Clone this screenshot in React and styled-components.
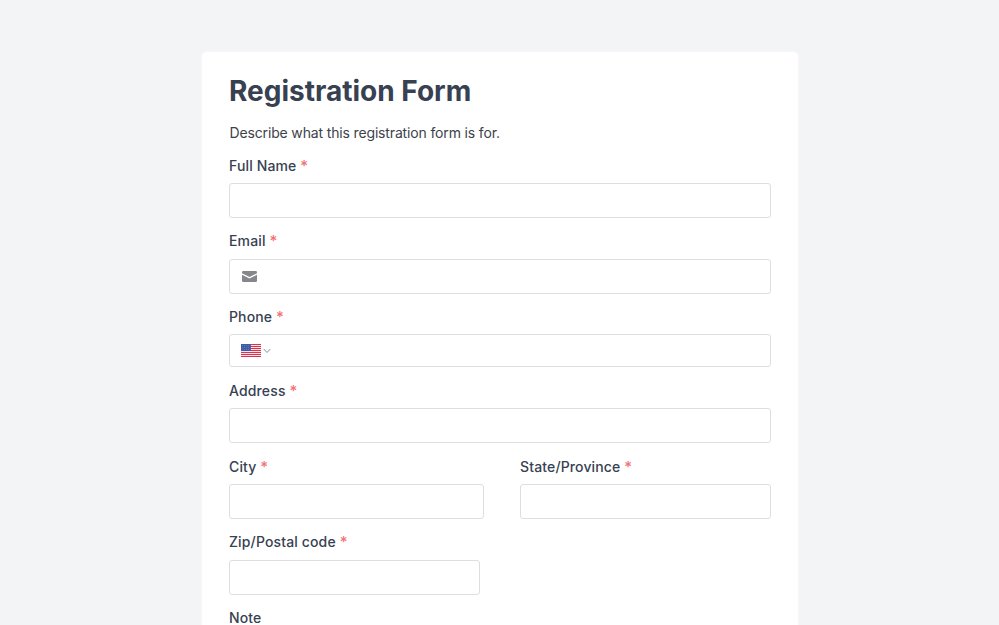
import React from 'react';
import styled, { createGlobalStyle } from 'styled-components';

const GlobalStyle = createGlobalStyle`
  * { box-sizing: border-box; }
  html, body { margin: 0; }
  body { background: #f3f4f6; font-family: Inter, sans-serif; color: #374151; }
`;
const Page = styled.main`
  height: 625px;
  overflow: hidden;
  padding-top: 52px;
`;
const Card = styled.form`
  width: 596px;
  height: 700px;
  margin: 0 auto 0 202px;
  padding: 20px 27px 0;
  background: #fff;
  border-radius: 5px;
  box-shadow: 0 0 3px rgba(255, 255, 255, 0.7);
`;
const Title = styled.h1`
  margin: 0;
  height: 50px;
  line-height: 38px;
  font-size: 28px;
  font-weight: 700;
`;
const Intro = styled.p`
  margin: 0;
  height: 31.8px;
  line-height: 22px;
  font-size: 14px;
  letter-spacing: -0.15px;
  padding-left: 0.5px;
  color: #3d424a;
`;
const Field = styled.div`
  width: ${(p) => p.$width || 542}px;
  height: ${(p) => p.$height || 75.66}px;
`;
const Label = styled.label`
  display: block;
  height: 29.2px;
  line-height: 24px;
  font-size: 14px;
  font-weight: 500;
  letter-spacing: 0.14px;
`;
const Star = styled.span`
  color: #f47074;
  font-size: 15px;
  line-height: 1;
`;
const Box = styled.div`
  display: flex;
  align-items: center;
  gap: 2px;
  height: ${(p) => p.$height || 35}px;
  padding-left: 11px;
  border: 1px solid #dcdee1;
  border-radius: 3px;
  background: #fff;
`;
const Row = styled.div`
  display: flex;
  justify-content: space-between;
`;
const Envelope = styled.svg`
  width: 15px;
  height: 11px;
  margin-left: 1px;
  fill: #85878c;
`;
const FlagIcon = styled.svg`
  width: 20px;
  height: 13px;
`;
const Chevron = styled.svg`
  width: 8px;
  height: 6px;
  fill: none;
  stroke: #8b8e92;
  stroke-width: 1;
  margin-top: 1px;
`;

const MailIcon = () => (
  <Envelope viewBox="0 0 15 11">
    <path d="M1.3 0h12.4Q15 0 15 1.3v.9L7.5 6.1 0 2.2v-.9Q0 0 1.3 0Z" />
    <path d="M0 3.7 7.5 7.6 15 3.7v6Q15 11 13.7 11H1.3Q0 11 0 9.7Z" />
  </Envelope>
);

const STRIPES = [0, 2, 4, 6, 8, 10, 12];

const UsFlag = () => (
  <FlagIcon viewBox="0 0 20 13" preserveAspectRatio="none">
    <path fill="#fbdfe3" d="M0 0h20v13H0z" />
    {STRIPES.map((y) => (
      <path key={y} fill="#d5354f" d={`M0 ${y}h20v1H0z`} />
    ))}
    <path fill="#3f5ba6" d="M0 0h10v7H0z" />
    {[1, 3, 5].map((y) => (
      <path key={y} stroke="#8295c8" strokeWidth="0.6" strokeDasharray="0.8 1.2" d={`M1 ${y + 0.5}h8.5`} />
    ))}
  </FlagIcon>
);

const FormField = ({ label, required = true, children, width, height, boxHeight }) => (
  <Field $width={width} $height={height}>
    <Label>{label} {required && <Star>*</Star>}</Label>
    <Box $height={boxHeight}>{children}</Box>
  </Field>
);

export default function App() {
  return (
    <Page>
      <GlobalStyle />
      <Card>
        <Title>Registration Form</Title>
        <Intro>Describe what this registration form is for.</Intro>
        <FormField label="Full Name" />
        <FormField label="Email"><MailIcon /></FormField>
        <FormField label="Phone" height={73.9} boxHeight={33}>
          <UsFlag />
          <Chevron viewBox="0 0 8 6"><path d="m.7 1 3.3 3.5L7.3 1" /></Chevron>
        </FormField>
        <FormField label="Address" />
        <Row>
          <FormField label="City" width={255} />
          <FormField label="State/Province" width={251} />
        </Row>
        <FormField label="Zip/Postal code" width={251} />
        <FormField label="Note" required={false} />
      </Card>
    </Page>
  );
}
